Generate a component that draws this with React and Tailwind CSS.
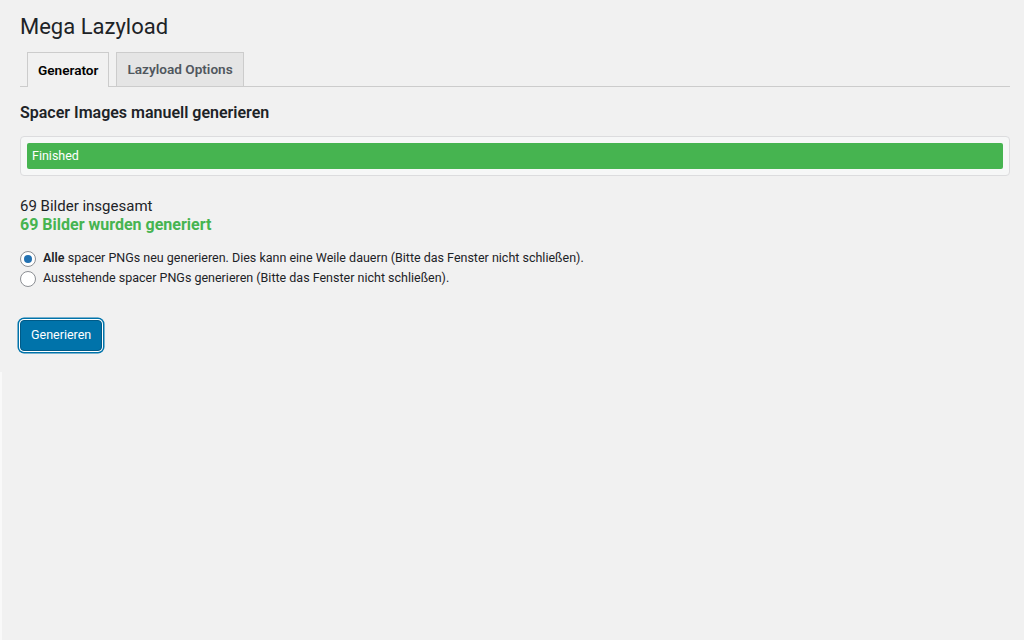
export default function App() {
  return (
    <div className="min-h-[640px] w-full bg-[#f1f1f1] text-[#1d2327] font-['Roboto','Liberation_Sans',Arial,sans-serif] border-l-2 border-l-[#f1f1f1] relative">
      <div className="absolute left-[-2px] top-[372px] bottom-0 w-[2px] bg-[#f9f9f9]" />
      <div className="pl-[18px] pr-[14px] pt-[12px]">
        {/* page title */}
        <h1 className="text-[22px] leading-[29px] font-normal">Mega Lazyload</h1>

        {/* tabs */}
        <div className="mt-[11px] flex items-end border-b border-[#cccccc] pl-[7px] gap-[7px]">
          <div className="h-[35px] -mb-px px-[10px] flex items-center text-[13.6px] font-semibold text-black border border-b-0 border-[#cccccc] bg-[#f1f1f1]">
            Generator
          </div>
          <div className="h-[34px] px-[10px] flex items-center text-[13.6px] font-semibold text-[#50575e] border border-b-0 border-[#cccccc] bg-[#e5e5e5]">
            Lazyload Options
          </div>
        </div>

        <h2 className="mt-[15px] text-[16px] leading-[22px] font-semibold">Spacer Images manuell generieren</h2>

        {/* progress */}
        <div className="mt-[12px] rounded-[4px] border border-[#dcdcde] bg-[#f6f7f7] p-[6px]">
          <div className="h-[26px] rounded-[2px] bg-[#46b450] flex items-center px-[5px] text-[12.5px] text-white">
            Finished
          </div>
        </div>

        <div className="mt-[22px] text-[15px] leading-[17px]">69 Bilder insgesamt</div>
        <div className="text-[16px] leading-[19px] font-bold text-[#46b450]">69 Bilder wurden generiert</div>

        {/* options */}
        <div className="mt-[16px] flex flex-col gap-[3px] text-[12.5px] text-[#1d2327]">
          <label className="flex items-center gap-[7px] h-[17px]">
            <span className="w-[16px] h-[16px] rounded-full border border-[#8c8f94] bg-white flex items-center justify-center">
              <span className="w-[8px] h-[8px] rounded-full bg-[#2271b1]" />
            </span>
            <span><b className="font-semibold">Alle</b> spacer PNGs neu generieren. Dies kann eine Weile dauern (Bitte das Fenster nicht schließen).</span>
          </label>
          <label className="flex items-center gap-[7px] h-[17px]">
            <span className="w-[16px] h-[16px] rounded-full border border-[#8c8f94] bg-white" />
            <span>Ausstehende spacer PNGs generieren (Bitte das Fenster nicht schließen).</span>
          </label>
        </div>

        <button className="mt-[33px] h-[31px] px-[10px] rounded-[4px] bg-[#0073aa] text-white text-[12.5px] border border-[#005a87] shadow-[0_0_0_1px_#fff,0_0_0_2.5px_#0073aa]">
          Generieren
        </button>
      </div>
    </div>
  );
}
